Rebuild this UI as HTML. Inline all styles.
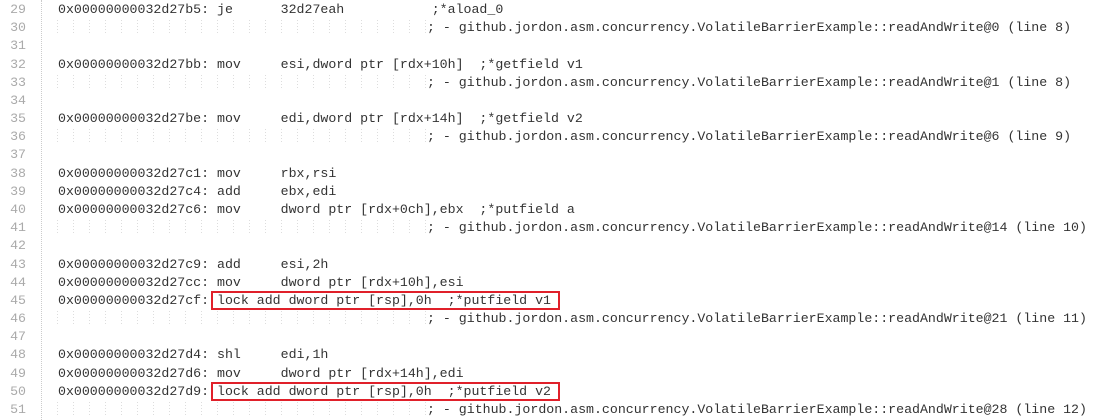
<!DOCTYPE html>
<html><head><meta charset="utf-8"><style>
html,body{margin:0;padding:0;background:#fff;}
body{width:1099px;height:420px;overflow:hidden;position:relative;font-family:"Liberation Mono",monospace;font-size:13.25px;color:#333;}
.gut{position:absolute;left:41px;top:0;height:420px;border-left:1px dotted #ccc;}
.l{position:absolute;left:0;width:1099px;height:18.18px;line-height:18.18px;white-space:pre;margin-top:1px;}
.n{position:absolute;left:0;width:26px;text-align:right;color:#aaa;}
.t{position:absolute;left:58px;}
.c{position:absolute;left:427px;}
.g{position:absolute;left:57px;width:370px;top:1px;height:14px;background-image:repeating-linear-gradient(to right,#ddd 0,#ddd 1px,transparent 1px,transparent 16px);-webkit-mask:repeating-linear-gradient(to bottom,#000 0,#000 1px,transparent 1px,transparent 3px);mask:repeating-linear-gradient(to bottom,#000 0,#000 1px,transparent 1px,transparent 3px);}
.box{position:absolute;left:211px;top:-1px;width:349px;height:19px;border:2px solid #e0202a;box-sizing:border-box;}
</style></head><body>
<div class="gut"></div>
<div class="l" style="top:0px"><span class="n">29</span><span class="t">0x00000000032d27b5: je      32d27eah           ;*aload_0</span></div>
<div class="l" style="top:18.18px"><div class="g"></div><span class="n">30</span><span class="c">; - github.jordon.asm.concurrency.VolatileBarrierExample::readAndWrite@0 (line 8)</span></div>
<div class="l" style="top:36.36px"><span class="n">31</span></div>
<div class="l" style="top:54.54px"><span class="n">32</span><span class="t">0x00000000032d27bb: mov     esi,dword ptr [rdx+10h]  ;*getfield v1</span></div>
<div class="l" style="top:72.72px"><div class="g"></div><span class="n">33</span><span class="c">; - github.jordon.asm.concurrency.VolatileBarrierExample::readAndWrite@1 (line 8)</span></div>
<div class="l" style="top:90.9px"><span class="n">34</span></div>
<div class="l" style="top:109.08px"><span class="n">35</span><span class="t">0x00000000032d27be: mov     edi,dword ptr [rdx+14h]  ;*getfield v2</span></div>
<div class="l" style="top:127.26px"><div class="g"></div><span class="n">36</span><span class="c">; - github.jordon.asm.concurrency.VolatileBarrierExample::readAndWrite@6 (line 9)</span></div>
<div class="l" style="top:145.44px"><span class="n">37</span></div>
<div class="l" style="top:163.62px"><span class="n">38</span><span class="t">0x00000000032d27c1: mov     rbx,rsi</span></div>
<div class="l" style="top:181.8px"><span class="n">39</span><span class="t">0x00000000032d27c4: add     ebx,edi</span></div>
<div class="l" style="top:199.98px"><span class="n">40</span><span class="t">0x00000000032d27c6: mov     dword ptr [rdx+0ch],ebx  ;*putfield a</span></div>
<div class="l" style="top:218.16px"><div class="g"></div><span class="n">41</span><span class="c">; - github.jordon.asm.concurrency.VolatileBarrierExample::readAndWrite@14 (line 10)</span></div>
<div class="l" style="top:236.34px"><span class="n">42</span></div>
<div class="l" style="top:254.52px"><span class="n">43</span><span class="t">0x00000000032d27c9: add     esi,2h</span></div>
<div class="l" style="top:272.7px"><span class="n">44</span><span class="t">0x00000000032d27cc: mov     dword ptr [rdx+10h],esi</span></div>
<div class="l" style="top:290.88px"><div class="box"></div><span class="n">45</span><span class="t">0x00000000032d27cf: lock add dword ptr [rsp],0h  ;*putfield v1</span></div>
<div class="l" style="top:309.06px"><div class="g"></div><span class="n">46</span><span class="c">; - github.jordon.asm.concurrency.VolatileBarrierExample::readAndWrite@21 (line 11)</span></div>
<div class="l" style="top:327.24px"><span class="n">47</span></div>
<div class="l" style="top:345.42px"><span class="n">48</span><span class="t">0x00000000032d27d4: shl     edi,1h</span></div>
<div class="l" style="top:363.6px"><span class="n">49</span><span class="t">0x00000000032d27d6: mov     dword ptr [rdx+14h],edi</span></div>
<div class="l" style="top:381.78px"><div class="box"></div><span class="n">50</span><span class="t">0x00000000032d27d9: lock add dword ptr [rsp],0h  ;*putfield v2</span></div>
<div class="l" style="top:399.96px"><div class="g"></div><span class="n">51</span><span class="c">; - github.jordon.asm.concurrency.VolatileBarrierExample::readAndWrite@28 (line 12)</span></div>
</body></html>
